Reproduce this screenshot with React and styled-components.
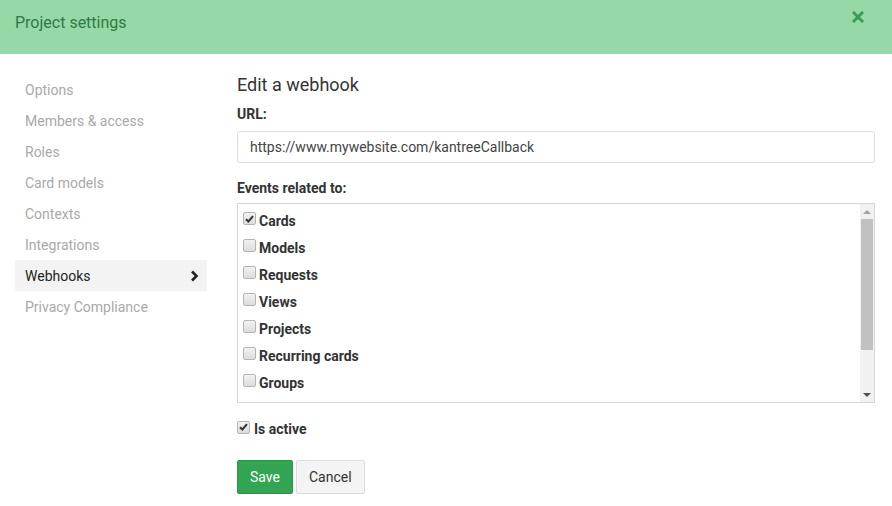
import styled, { createGlobalStyle } from 'styled-components';

const GlobalStyle = createGlobalStyle`
    body {
        margin: 0;
        font-family: Roboto, "Liberation Sans", sans-serif;
        background: #fff;
        color: #333;
    }
`

const events = [
    { label: "Cards", checked: true },
    { label: "Models" },
    { label: "Requests" },
    { label: "Views" },
    { label: "Projects" },
    { label: "Recurring cards" },
    { label: "Groups" },
]

const menu = ["Options", "Members & access", "Roles", "Card models", "Contexts", "Integrations", "Webhooks", "Privacy Compliance"]

function Check({ checked }) {
    return (
        <Box>
            {checked && (
                <svg width="9" height="8" viewBox="0 0 9 8">
                    <path d="M1 4.2 L3.4 6.5 L8 1.2" fill="none" stroke="#333" strokeWidth="2" />
                </svg>
            )}
        </Box>
    )
}

export default function App() {
    return (
        <>
            <GlobalStyle />
            <Page>
                <Header>
                    <Title>Project settings</Title>
                    <Close>
                        <svg width="12" height="12" viewBox="0 0 12 12">
                            <path d="M2 2 L10 10 M10 2 L2 10" stroke="#3b9c57" strokeWidth="3" strokeLinecap="square" />
                        </svg>
                    </Close>
                </Header>
                <Body>
                    <Sidebar>
                        {menu.map((m) => (
                            <MenuItem key={m} $active={m === "Webhooks"}>
                                {m}
                                {m === "Webhooks" && (
                                    <svg width="9" height="12" viewBox="0 0 9 12">
                                        <path d="M2 1.5 L6.5 6 L2 10.5" fill="none" stroke="#222" strokeWidth="2.6" />
                                    </svg>
                                )}
                            </MenuItem>
                        ))}
                    </Sidebar>
                    <Main>
                        <Heading>Edit a webhook</Heading>
                        <Label>URL:</Label>
                        <Input>https://www.mywebsite.com/kantreeCallback</Input>
                        <Label $top={16}>Events related to:</Label>
                        <ListBox>
                            <List>
                                {events.map((e) => (
                                    <Option key={e.label}>
                                        <Check checked={e.checked} />
                                        {e.label}
                                    </Option>
                                ))}
                            </List>
                            <Scrollbar>
                                <Arrow $up />
                                <Track>
                                    <Thumb />
                                </Track>
                                <Arrow />
                            </Scrollbar>
                        </ListBox>
                        <Active>
                            <Check checked />
                            Is active
                        </Active>
                        <Buttons>
                            <Button $primary>Save</Button>
                            <Button>Cancel</Button>
                        </Buttons>
                    </Main>
                </Body>
            </Page>
        </>
    )
}

const Page = styled.div`
    width: 892px;
    height: 506px;
    overflow: hidden;
`

const Header = styled.div`
    height: 54px;
    background: #96d8a6;
    display: flex;
    justify-content: space-between;
    padding: 0 28px 0 15px;
    box-sizing: border-box;
`

const Title = styled.div`
    font-size: 16px;
    color: #2f7a45;
    line-height: 45px;
`

const Close = styled.div`
    padding-top: 8px;
`

const Body = styled.div`
    display: flex;
    padding: 20px 0 0 15px;
`

const Sidebar = styled.div`
    width: 192px;
    display: flex;
    flex-direction: column;
`

const MenuItem = styled.div`
    height: 31px;
    display: flex;
    align-items: center;
    justify-content: space-between;
    padding: 0 8px 0 10px;
    font-size: 14px;
    color: ${(p) => (p.$active ? "#222" : "#a9a9a9")};
    background: ${(p) => (p.$active ? "#f3f3f3" : "transparent")};
    border-radius: 2px;
`

const Main = styled.div`
    margin-left: 30px;
    width: 638px;
    display: flex;
    flex-direction: column;
`

const Heading = styled.div`
    font-size: 18px;
    color: #333;
    margin-top: -1px;
    line-height: 24px;
`

const Label = styled.div`
    font-size: 14px;
    font-weight: bold;
    color: #333;
    margin-top: ${(p) => (p.$top ? p.$top : 8)}px;
    line-height: 18px;
`

const Input = styled.div`
    margin-top: 8px;
    height: 32px;
    box-sizing: border-box;
    border: 1px solid #ddd;
    border-radius: 3px;
    padding: 0 12px;
    display: flex;
    align-items: center;
    font-size: 14px;
    color: #444;
`

const ListBox = styled.div`
    margin-top: 6px;
    height: 200px;
    box-sizing: border-box;
    border: 1px solid #d6d6d6;
    display: flex;
`

const List = styled.div`
    flex: 1;
    padding: 3px 0 0 5px;
`

const Option = styled.div`
    height: 27px;
    display: flex;
    align-items: center;
    gap: 3px;
    font-size: 14px;
    font-weight: bold;
    color: #333;
`

const Box = styled.span`
    width: 11px;
    height: 11px;
    border: 1px solid #b5b5b5;
    border-radius: 2px;
    background: linear-gradient(#f2f2f2, #dcdcdc);
    display: inline-flex;
    align-items: center;
    justify-content: center;
    position: relative;
    top: -2px;
`

const Scrollbar = styled.div`
    width: 14px;
    background: #f1f1f1;
    display: flex;
    flex-direction: column;
    align-items: center;
`

const Arrow = styled.div`
    height: 15px;
    width: 100%;
    display: flex;
    align-items: center;
    justify-content: center;
    &::after {
        content: "";
        border-left: 4px solid transparent;
        border-right: 4px solid transparent;
        ${(p) => (p.$up ? "border-bottom: 4px solid #a3a3a3;" : "border-top: 4px solid #505050;")}
    }
`

const Track = styled.div`
    flex: 1;
    width: 100%;
    padding: 0 1px;
    box-sizing: border-box;
`

const Thumb = styled.div`
    height: 131px;
    background: #c1c1c1;
`

const Active = styled.div`
    margin-top: 18px;
    display: flex;
    align-items: center;
    gap: 4px;
    font-size: 14px;
    font-weight: bold;
    color: #333;
`

const Buttons = styled.div`
    margin-top: 23px;
    display: flex;
    gap: 3px;
`

const Button = styled.div`
    height: 34px;
    box-sizing: border-box;
    padding: 0 12px;
    display: flex;
    align-items: center;
    font-size: 14px;
    border-radius: 2px;
    border: 1px solid ${(p) => (p.$primary ? "#2a9548" : "#dcdcdc")};
    background: ${(p) => (p.$primary ? "#33a452" : "#f4f4f4")};
    color: ${(p) => (p.$primary ? "#fff" : "#333")};
`
